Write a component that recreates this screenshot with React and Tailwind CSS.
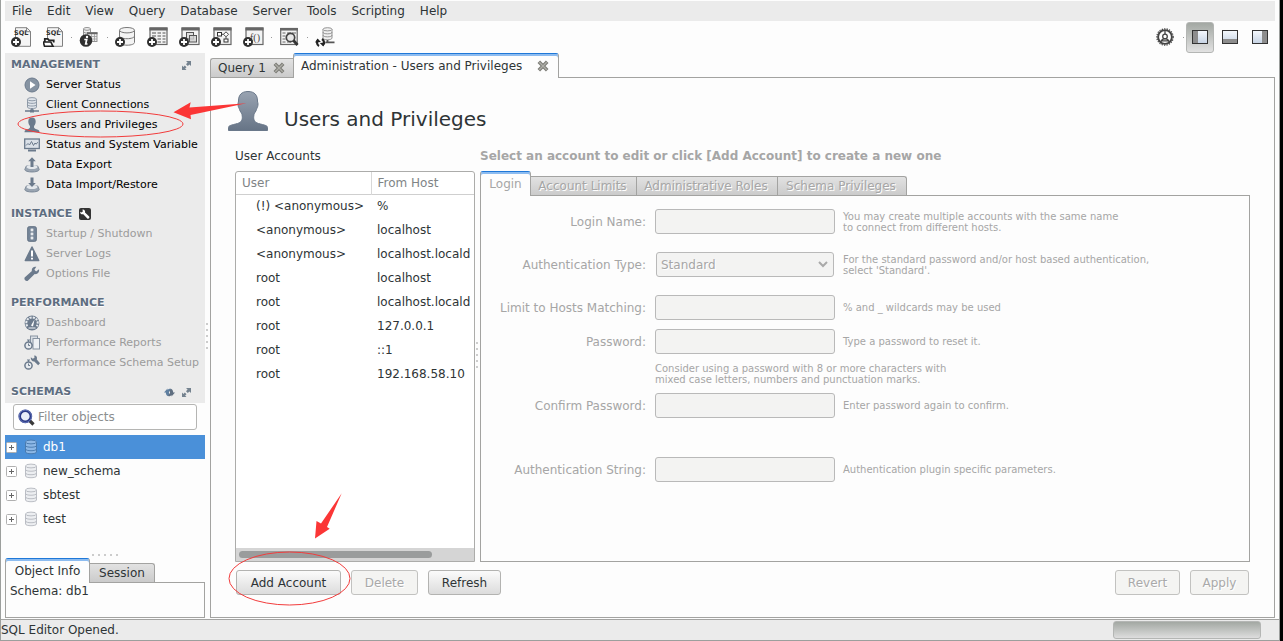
import React from "react";

/* ---------- toolbar icons ---------- */

function Badge() {
  return (
    <g>
      <circle cx="5" cy="15" r="5" fill="#2f2f2f" />
      <path d="M5 12v6M2 15h6" stroke="#fff" strokeWidth="1.8" />
    </g>
  );
}

function SqlPage() {
  return (
    <g>
      <path d="M4.500 .7h11.300l3.700 3.800v14.800h-15z" fill="#f5f5f5" stroke="#808080" />
      <path d="M15.600 .7v4h4" fill="none" stroke="#808080" />
      <text x="3" y="7.600" fontSize="6.500" fontWeight="bold" fill="#333" fontFamily="DejaVu Sans, sans-serif">
        SQL
      </text>
    </g>
  );
}

function TableFrame() {
  return (
    <g>
      <rect x="3" y="1" width="17" height="16.5" fill="#f3f3f3" stroke="#666" strokeWidth="1.2" />
      <path d="M2.500 2h18" stroke="#666" strokeWidth="3" />
    </g>
  );
}

function Cylinder() {
  return (
    <g fill="#f3f3f3" stroke="#777" strokeWidth="1">
      <path d="M4.500 3.200v12.300c0 1.500 3.400 2.700 7.600 2.700s7.400-1.200 7.400-2.700V3.200" />
      <ellipse cx="12" cy="3.200" rx="7.500" ry="2.700" />
      <path d="M4.500 9c0 1.500 3.400 2.700 7.600 2.700s7.400-1.200 7.400-2.700" fill="none" />
    </g>
  );
}

const toolIcons = {
  newSql: (
    <>
      <SqlPage />
      <Badge />
    </>
  ),
  openSql: (
    <>
      <SqlPage />
      <path d="M3.500 13h9v3h-9z" fill="#f5f5f5" />
      <path d="M1.800 18.500V11.800h3l1.300 1.500h4.600v2.200" fill="#fff" stroke="#222" strokeWidth="1.800" />
      <path d="M.3 15h7.500l2.200 4.300H1.500z" fill="#fff" stroke="#222" strokeWidth="1.600" />
    </>
  ),
  inspector: (
    <>
      <g fill="#eee" stroke="#888" strokeWidth=".9">
        <path d="M4.500 1.900v8h7v-8" />
        <ellipse cx="8" cy="1.900" rx="3.500" ry="1.400" />
        <path d="M4.500 5c1.500 1.500 5.500 1.500 7 0" fill="none" />
        <rect x="8.500" y="5.500" width="9.500" height="9" />
      </g>
      <path d="M8 6.300h10.500" stroke="#666" strokeWidth="1.800" />
      <path d="M9 9.500h9M9 12h9M12.500 7v7M15.500 7v7" stroke="#999" strokeWidth=".8" />
      <circle cx="7" cy="13.500" r="6.300" fill="#2f2f2f" />
      <circle cx="8" cy="10" r="1.200" fill="#fff" />
      <path d="M5.300 12.500h2.400l-1 4.500h1.800" fill="none" stroke="#fff" strokeWidth="1.700" />
    </>
  ),
  newSchema: (
    <>
      <Cylinder />
      <Badge />
    </>
  ),
  newTable: (
    <>
      <TableFrame />
      <path
        d="M5 6h4M10.500 6h3.500M15.500 6h3M5 9h4M10.500 9h3.500M15.500 9h3M10.500 12h3.500M15.500 12h3M10.500 15h3.500M15.500 15h3"
        stroke="#555"
        strokeWidth="1.200"
      />
      <Badge />
    </>
  ),
  newView: (
    <>
      <TableFrame />
      <rect x="7.500" y="5.500" width="7" height="6.500" fill="#e0e0e0" stroke="#555" />
      <rect x="10.500" y="8.500" width="7" height="6.500" fill="#d0d0d0" fillOpacity=".8" stroke="#555" />
      <Badge />
    </>
  ),
  newProcedure: (
    <>
      <TableFrame />
      <rect x="6.500" y="5.500" width="4" height="3.500" fill="#fff" stroke="#333" />
      <path d="M15 4.800l2.500 2.500-2.500 2.500-2.500-2.500zM10.500 7.300h2M15 9.800v2" fill="#fff" stroke="#333" strokeWidth=".9" />
      <rect x="13" y="12" width="4" height="3" fill="#fff" stroke="#333" />
      <Badge />
    </>
  ),
  newFunction: (
    <>
      <TableFrame />
      <text x="7" y="13.500" fontSize="10" fill="#444" fontFamily="Liberation Serif, serif">
        f()
      </text>
      <Badge />
    </>
  ),
  search: (
    <>
      <rect x="1.700" y="1.500" width="16.500" height="16" fill="#f3f3f3" stroke="#666" strokeWidth="1.200" />
      <path d="M1 2.300h18" stroke="#666" strokeWidth="2.500" />
      <path d="M3.500 6h3M3.500 9h3M3.500 12h3M3.500 15h3M8 6h4M13 6h4M8 15h4" stroke="#666" strokeWidth="1.200" />
      <circle cx="11.500" cy="10.500" r="4.200" fill="#e8e8e8" stroke="#444" strokeWidth="1.700" />
      <path d="M14.500 13.500l4 4.500" stroke="#333" strokeWidth="2.800" />
    </>
  ),
  reconnect: (
    <>
      <g fill="#f0f0f0" stroke="#888" strokeWidth=".9">
        <path d="M8 2.300v8.700c0 2.400 9 2.400 9 0V2.300" />
        <ellipse cx="12.500" cy="2.300" rx="4.500" ry="1.600" />
        <path d="M8 5.200c0 2.200 9 2.200 9 0M8 8.200c0 2.200 9 2.200 9 0" fill="none" />
      </g>
      <path d="M12.500 13v3M10.500 15.300h9" stroke="#555" strokeWidth="1.800" />
      <path d="M4 19C1.500 17.500 1.500 14.500 3.500 13M7 12c2.500 1.500 2.500 4.500.5 6" fill="none" stroke="#222" strokeWidth="2.200" />
      <path d="M0 15.500l2.500-4 3.500 3.500zM10.800 15.500l-2.500 4-3.500-3.500z" fill="#222" />
    </>
  ),
};

function ToolButton({ name, label }) {
  return (
    <button aria-label={label} title={label} className="flex h-8 w-8 items-center justify-center">
      <svg width="21" height="21" viewBox="0 0 21 21">
        {toolIcons[name]}
      </svg>
    </button>
  );
}

function ToolSeparator() {
  return (
    <span className="flex h-8 w-1 items-center justify-center">
      <span className="size-px bg-[#9a9a9a]" />
    </span>
  );
}

function PaneIcon({ side }) {
  return (
    <svg width="16" height="14" viewBox="0 0 16 14">
      <defs>
        <linearGradient id={"pane-" + side} x1="0" y1="0" x2="0" y2="1">
          <stop offset="0" stopColor="#f6f9fd" />
          <stop offset="1" stopColor="#c6d3e4" />
        </linearGradient>
      </defs>
      <rect x=".5" y=".5" width="15" height="13" fill={"url(#pane-" + side + ")"} stroke="#333" />
      {side === "left" && <rect x="1" y="1" width="5" height="12" fill="#8d8d8d" />}
      {side === "bottom" && <rect x="1" y="9" width="14" height="4" fill="#8d8d8d" />}
      {side === "right" && <rect x="10" y="1" width="5" height="12" fill="#8d8d8d" />}
    </svg>
  );
}

/* ---------- sidebar icons ---------- */

const SLATE = "#6b7a8c";

const navIcons = {
  play: (
    <>
      <circle cx="8" cy="8" r="7" fill="#8693a2" stroke={SLATE} />
      <path d="M6 4.300l5.500 3.700L6 11.700z" fill="#fff" />
    </>
  ),
  connections: (
    <>
      <g fill="#dfe4ea" stroke="#8793a1" strokeWidth=".9">
        <path d="M3.500 2.200v8c0 1.800 9 1.800 9 0v-8" />
        <ellipse cx="8" cy="2.200" rx="4.500" ry="1.600" />
        <path d="M3.500 5c0 1.800 9 1.800 9 0M3.500 7.700c0 1.800 9 1.800 9 0" fill="none" />
      </g>
      <path d="M1 14h14M8 11.500V14" stroke={SLATE} strokeWidth="1.600" />
      <rect x="6" y="12.500" width="4" height="3" fill={SLATE} />
    </>
  ),
  user: (
    <path
      d="M4.300 4.500C4.300 1.800 5.600.5 8 .5s3.700 1.300 3.700 4c0 2-.6 3.200-1.600 4.500-.5 1.800.4 2.600 2.400 3.200 2 .5 3 .9 3 3.100H.5c0-2.200 1-2.600 3-3.100 2-.6 2.900-1.400 2.400-3.200C4.900 7.700 4.300 6.500 4.300 4.500z"
      fill={SLATE}
    />
  ),
  monitor: (
    <>
      <rect x=".7" y="2" width="14.600" height="9.500" fill="#dbe1e8" stroke={SLATE} strokeWidth="1.300" />
      <path d="M2 8.500l2-2L5.500 8l2-3.500 2 4L11 6l1.200 1.200 1.500-2" fill="none" stroke={SLATE} />
      <path d="M4 12.500h8v2H4z" fill={SLATE} />
    </>
  ),
  export: (
    <>
      <path d="M2.300 9h11.400l1.500 3.500c0 3.300-14.400 3.300-14.400 0z" fill="#9aa5b2" stroke="#7d8a99" />
      <ellipse cx="8" cy="10" rx="5.500" ry="2" fill="#e4e8ec" />
      <path d="M8 .3l3.800 4H9.500V10h-3V4.300H4.200z" fill={SLATE} />
    </>
  ),
  import: (
    <>
      <path d="M2.300 9h11.400l1.500 3.500c0 3.300-14.400 3.300-14.400 0z" fill="#9aa5b2" stroke="#7d8a99" />
      <ellipse cx="8" cy="10" rx="5.500" ry="2" fill="#e4e8ec" />
      <path d="M8 10L4.200 6h2.300V.5h3V6h2.300z" fill={SLATE} />
    </>
  ),
  traffic: (
    <>
      <rect x="3.700" y=".7" width="8.600" height="14.600" rx="1.500" fill="#77879a" stroke="#5f6e80" />
      <g fill="#e9ecef" stroke="#5f6e80" strokeWidth=".5">
        <circle cx="8" cy="4" r="1.900" />
        <circle cx="8" cy="8" r="1.900" />
        <circle cx="8" cy="12" r="1.900" />
      </g>
    </>
  ),
  warning: (
    <>
      <path d="M8 1l6.700 13.500H1.300z" fill={SLATE} stroke={SLATE} strokeLinejoin="round" strokeWidth="1.500" />
      <path d="M8 4.500v6M8 11.800v1.800" stroke="#fff" strokeWidth="2" />
    </>
  ),
  wrench: (
    <path
      d="M15 3.300l-2.900 2.100-1.700-1.700L12.300.8C9.700 0 7.200 2.200 7.900 5L.9 11.200c-1.700 1.900 1.300 5 3.200 3.200L10.700 8c2.700.8 5-1.900 4.300-4.700z"
      fill={SLATE}
    />
  ),
  gauge: (
    <>
      <circle cx="8" cy="8" r="7.400" fill={SLATE} />
      <path d="M3.300 11.300A5.700 5.700 0 1 1 12.700 11.300" fill="none" stroke="#e6eaee" strokeWidth="2" strokeDasharray="2.200 1" />
      <path d="M7 10.500L10.500 4.500 9 11.500z" fill="#fff" />
      <path d="M4.500 13h7" stroke="#c4ccd4" strokeWidth="1.500" />
    </>
  ),
  reports: (
    <>
      <rect x="6.500" y="1" width="7" height="9" fill="#d9dee4" stroke="#8793a1" />
      <rect x="9" y="3.500" width="6.500" height="10.500" fill="#eef1f4" stroke="#8793a1" />
      <circle cx="4.500" cy="10.500" r="3.600" fill="#e6eaee" stroke={SLATE} strokeWidth="1.500" />
      <path d="M4.500 5v2M3 5h3M4.500 8.500v2h1.500" stroke={SLATE} fill="none" />
    </>
  ),
  setup: (
    <>
      <circle cx="4.500" cy="10.500" r="3.600" fill="#e6eaee" stroke={SLATE} strokeWidth="1.500" />
      <path d="M4.500 5v2M3 5h3M4.500 8.500v2h1.500" stroke={SLATE} fill="none" />
      <path
        d="M6.800 2.200l2 1.600 1.700-1L10.200.6C12.500.5 13.600 2.700 12.800 4.500l3.200 3.800-1.800 2-3.900-3.900C8.300 6.700 6.500 4.800 6.800 2.200z"
        fill={SLATE}
      />
    </>
  ),
};

function NavItem({ icon, children, disabled }) {
  return (
    <li>
      <button
        disabled={disabled}
        className="flex h-5 w-full items-center gap-[6px] overflow-hidden pl-[19px] text-left text-[11px] whitespace-nowrap text-black disabled:text-[#9b9b9b]"
      >
        <svg width="16" height="16" viewBox="0 0 16 16" className="shrink-0">
          {navIcons[icon]}
        </svg>
        {children}
      </button>
    </li>
  );
}

function ExpandIcon() {
  return (
    <svg width="9" height="9" viewBox="0 0 9 9">
      <path d="M4 0h5v5L7.400 3.400 5.800 5 4 3.200 5.600 1.600z" fill="#74828f" />
      <path d="M0 4.500l1.400 1.400L2.800 4.500l1.700 1.700-1.400 1.400L4.500 9H0z" fill="#74828f" />
    </svg>
  );
}

function SectionHeader({ title, children }) {
  return (
    <div className="flex h-5 items-center gap-[7px] pr-[14px] pl-[6px]">
      <h2 className="text-[11px] font-bold text-[#5d6d80] [text-shadow:0_1px_0_#fff]">{title}</h2>
      {children}
    </div>
  );
}

function SchemaRow({ name, selected }) {
  return (
    <li className={selected ? "flex h-6 items-center bg-[#4a90d9] pl-px text-white" : "flex h-6 items-center pl-px"}>
      <button aria-label={"Expand " + name} className="size-[11px]">
        <svg width="11" height="11" viewBox="0 0 11 11">
          <rect x=".5" y=".5" width="10" height="10" rx="1" fill="#fff" stroke="#b0b0b0" />
          <path d="M3 5.500h5M5.500 3v5" stroke="#666" />
        </svg>
      </button>
      <svg width="14" height="16" viewBox="0 0 14 16" className="ml-[7px]">
        <g fill={selected ? "#8db8e6" : "#eceef1"} stroke={selected ? "#4677ab" : "#b4b8be"} strokeWidth=".9">
          <path d="M1.500 3v10c0 2.300 11 2.300 11 0V3" />
          <ellipse cx="7" cy="3" rx="5.500" ry="1.900" />
          <path d="M1.500 6.500c0 2.300 11 2.300 11 0M1.500 10c0 2.300 11 2.300 11 0" fill="none" />
        </g>
      </svg>
      <span className="ml-[5px]">{name}</span>
    </li>
  );
}

function Dots({ vertical }) {
  return (
    <div className={vertical ? "flex flex-col gap-[4px]" : "flex gap-[4px]"}>
      {[0, 1, 2, 3, 4].map((i) => (
        <span key={i} className="size-[2px] bg-[#cccccc]" />
      ))}
    </div>
  );
}

function CloseIcon() {
  return (
    <svg width="12" height="12" viewBox="0 0 12 12">
      <path d="M1.800 1.800l8.400 8.400M10.200 1.800L1.800 10.200" stroke="#7d7d77" strokeWidth="3.600" />
      <path d="M2.300 2.300l7.400 7.400M9.700 2.300L2.300 9.700" stroke="#aeaea8" strokeWidth="1.300" />
    </svg>
  );
}

/* ---------- right side ---------- */

const accounts = [
  ["(!) <anonymous>", "%"],
  ["<anonymous>", "localhost"],
  ["<anonymous>", "localhost.locald"],
  ["root", "localhost"],
  ["root", "localhost.locald"],
  ["root", "127.0.0.1"],
  ["root", "::1"],
  ["root", "192.168.58.10"],
];

function Field({ id, label, note, type = "text", className = "", children }) {
  return (
    <div className={"grid grid-cols-[165px_180px_1fr] items-center " + className}>
      <label htmlFor={id} className="text-right">
        {label}
      </label>
      <div className="ml-[9px] w-[180px]">
        {children || (
          <input id={id} type={type} disabled className="block h-[25px] w-full rounded-[3px] border border-[#b9b9b9] bg-[#f3f3f2] px-1" />
        )}
      </div>
      <p className="ml-[17px] text-[10px] leading-[11px]">{note}</p>
    </div>
  );
}

function Button({ children, disabled, className }) {
  return (
    <button
      disabled={disabled}
      className={
        "h-[25px] rounded-[3px] border border-[#b3b3b1] bg-linear-to-b from-[#fbfbfb] to-[#dcdcdc] disabled:border-[#c2c2c0] disabled:bg-none disabled:bg-[#f4f4f2] disabled:text-[#a9a9a9] disabled:[text-shadow:1px_1px_0_#fff] " +
        className
      }
    >
      {children}
    </button>
  );
}

const idleTab = "border border-b-0 border-l-0 border-[#a3a3a1] bg-linear-to-b from-[#e2e2e2] to-[#cbcbcb]";
const activeTab =
  "relative -mb-px border border-t-[#1f78d8] border-b-0 border-[#a3a3a1] bg-[#fdfdfd] shadow-[inset_0_2px_0_#8dbcf0] rounded-t-[3px]";

export default function App() {
  return (
    <div className="relative flex min-h-screen bg-black pr-[3px] font-['DejaVu_Sans',sans-serif] text-[12px] leading-[16px] text-[#2e3436]">
      <div className="flex min-w-0 flex-1 flex-col border-x border-b border-[#9c9f9d] bg-[#fdfdfd] pt-px">
        <nav className="mx-1 flex h-5 items-center gap-[15px] bg-[#ebebeb] pl-[7px]">
          {["File", "Edit", "View", "Query", "Database", "Server", "Tools", "Scripting", "Help"].map((m) => (
            <button key={m}>{m}</button>
          ))}
        </nav>

        <div className="mx-1 flex h-8 items-center pr-px">
          <ToolButton name="newSql" label="New SQL tab" />
          <ToolButton name="openSql" label="Open SQL script" />
          <ToolSeparator />
          <ToolButton name="inspector" label="Schema inspector" />
          <ToolSeparator />
          <ToolButton name="newSchema" label="New schema" />
          <ToolButton name="newTable" label="New table" />
          <ToolButton name="newView" label="New view" />
          <ToolButton name="newProcedure" label="New procedure" />
          <ToolButton name="newFunction" label="New function" />
          <ToolSeparator />
          <ToolButton name="search" label="Search table data" />
          <ToolSeparator />
          <ToolButton name="reconnect" label="Reconnect" />
          <div className="flex-1" />
          <button aria-label="Preferences" className="flex size-8 items-center justify-center">
            <svg width="18" height="18" viewBox="0 0 18 18" fill="none" stroke="#444">
              <circle cx="9" cy="9" r="8.200" strokeWidth="1.200" strokeDasharray="1.300 1.200" />
              <circle cx="9" cy="9" r="6.900" strokeWidth="1.900" />
              <path d="M9 2.500v4M4.500 14l2-2.500M13.500 14l-2-2.500" strokeWidth="1.300" />
              <circle cx="9" cy="8.500" r="2.300" strokeWidth="1.300" />
              <path d="M6 12.800c.5-3 5.500-3 6 0z" strokeWidth="1.200" />
            </svg>
          </button>
          <ToolSeparator />
          <div className="ml-px flex gap-[2px]">
            <button
              aria-label="Toggle sidebar"
              className="flex h-[31px] w-7 items-center justify-center rounded-[3px] border border-[#b4b6b4] bg-linear-to-b from-[#a3a8a3] to-[#e2e2e2]"
            >
              <PaneIcon side="left" />
            </button>
            <button aria-label="Toggle output area" className="flex h-[31px] w-7 items-center justify-center">
              <PaneIcon side="bottom" />
            </button>
            <button aria-label="Toggle secondary sidebar" className="flex h-[31px] w-7 items-center justify-center">
              <PaneIcon side="right" />
            </button>
          </div>
        </div>

        <div className="mx-1 mb-px flex flex-1">
          <aside className="flex w-[200px] shrink-0 flex-col">
            <div className="flex flex-col gap-[9px] bg-[#ebebeb] pt-[2px] pb-px">
              <section>
                <SectionHeader title="MANAGEMENT">
                  <button aria-label="Expand management" className="ml-auto">
                    <ExpandIcon />
                  </button>
                </SectionHeader>
                <ul>
                  <NavItem icon="play">Server Status</NavItem>
                  <NavItem icon="connections">Client Connections</NavItem>
                  <NavItem icon="user">Users and Privileges</NavItem>
                  <NavItem icon="monitor">Status and System Variable</NavItem>
                  <NavItem icon="export">Data Export</NavItem>
                  <NavItem icon="import">Data Import/Restore</NavItem>
                </ul>
              </section>
              <section>
                <SectionHeader title="INSTANCE">
                  <svg width="12" height="12" viewBox="0 0 12 12">
                    <rect width="12" height="12" rx="2" fill="#333" />
                    <path
                      d="M3.500 1.500l.3 2L2.500 4.600 1.200 3.700C1 5.500 2.500 6.700 4.300 6.200l4 4.300c1.200.8 2.700-.7 1.900-1.900L6 4.500C6.500 2.700 5.300 1.200 3.500 1.500z"
                      fill="#fff"
                    />
                  </svg>
                </SectionHeader>
                <ul>
                  <NavItem icon="traffic" disabled>Startup / Shutdown</NavItem>
                  <NavItem icon="warning" disabled>Server Logs</NavItem>
                  <NavItem icon="wrench" disabled>Options File</NavItem>
                </ul>
              </section>
              <section>
                <SectionHeader title="PERFORMANCE" />
                <ul>
                  <NavItem icon="gauge" disabled>Dashboard</NavItem>
                  <NavItem icon="reports" disabled>Performance Reports</NavItem>
                  <NavItem icon="setup" disabled>Performance Schema Setup</NavItem>
                </ul>
              </section>
              <SectionHeader title="SCHEMAS">
                <button aria-label="Refresh schemas" className="ml-auto">
                  <svg width="11" height="9" viewBox="0 0 11 9">
                    <path d="M0 4.500L3.500.5v1.600C4.500.9 6 .6 7.200 1L5.800 3C4.800 3.300 4.600 5.200 5.500 6L4.200 8.300C2.800 7.800 1.800 6.500 1.800 4.500z" fill="#5f7fa0" />
                    <path d="M11 4.500L7.500 8.500V6.900C6.500 8.100 5 8.400 3.800 8L5.200 6C6.200 5.700 6.400 3.800 5.500 3L6.800.7C8.200 1.200 9.200 2.500 9.200 4.500z" fill="#5f6e80" />
                  </svg>
                </button>
                <button aria-label="Expand schemas">
                  <ExpandIcon />
                </button>
              </SectionHeader>
            </div>

            <div className="mx-2 mt-px flex h-[26px] items-center gap-[3px] rounded-[3px] border border-[#b5b5b3] bg-white pl-1">
              <svg width="17" height="17" viewBox="0 0 17 17" className="shrink-0">
                <path d="M11 11l4.500 4.500" stroke="#3a3a3a" strokeWidth="3.200" />
                <circle cx="7.300" cy="7.300" r="5.600" fill="#e9eef8" stroke="#2b3a86" strokeWidth="2.600" />
                <circle cx="7.300" cy="7.300" r="6.200" fill="none" stroke="#7f90cf" strokeWidth=".7" />
              </svg>
              <input
                aria-label="Filter objects"
                placeholder="Filter objects"
                className="w-full min-w-0 bg-transparent outline-none placeholder:text-[#8b8e8f]"
              />
            </div>

            <ul className="mt-[5px] flex-1">
              <SchemaRow name="db1" selected />
              <SchemaRow name="new_schema" />
              <SchemaRow name="sbtest" />
              <SchemaRow name="test" />
            </ul>

            <div className="flex justify-center pb-[2px]">
              <Dots />
            </div>
            <div role="tablist" className="flex items-end">
              <button role="tab" aria-selected="true" className={activeTab + " h-[25px] w-[85px]"}>
                Object Info
              </button>
              <button role="tab" aria-selected="false" className={idleTab + " h-[19px] w-[65px] rounded-tr-[3px]"}>
                Session
              </button>
            </div>
            <div className="h-9 border border-[#a3a3a1] px-1">Schema: db1</div>
          </aside>

          <div className="flex w-[5px] shrink-0 items-center pl-px">
            <Dots vertical />
          </div>

          <main className="flex min-w-0 flex-1 flex-col">
            <div role="tablist" className="flex items-end">
              <button
                role="tab"
                aria-selected="false"
                className="flex h-[19px] w-[83px] items-center gap-[7px] rounded-tl-[3px] border border-r-0 border-b-0 border-[#a3a3a1] bg-linear-to-b from-[#e2e2e2] to-[#cbcbcb] pl-[7px]"
              >
                Query 1
                <CloseIcon />
              </button>
              <button
                role="tab"
                aria-selected="true"
                className={activeTab + " flex h-[25px] w-[266px] items-center justify-between pr-[9px] pl-[7px]"}
              >
                Administration - Users and Privileges
                <CloseIcon />
              </button>
            </div>

            <div className="flex flex-1 flex-col border border-[#a3a3a1] pr-6 pb-[22px] pl-[17px]">
              <header className="flex h-[53px] items-end gap-4">
                <svg width="40" height="40" viewBox="0 0 40 40">
                  <defs>
                    <linearGradient id="bust" x1="0" y1="0" x2="0" y2="1">
                      <stop offset="0" stopColor="#99a3b1" />
                      <stop offset="1" stopColor="#667486" />
                    </linearGradient>
                  </defs>
                  <path
                    d="M20 .5c6.500 0 9.500 3.500 9.500 9.500 0 1.500.8 2 .4 4.500-.3 2-1 2.500-1.400 4-.6 2.200-2 3-2.500 5-.8 4.500-.4 7.500 4.500 9 6 1.600 9 2 9 4v3h-39v-3c0-2 3-2.400 9-4 4.900-1.500 5.300-4.500 4.500-9-.5-2-1.900-2.800-2.500-5-.4-1.500-1.100-2-1.400-4-.4-2.500.4-3 .4-4.500 0-6 3-9.500 9.500-9.500z"
                    fill="url(#bust)"
                    stroke="#6a788a"
                  />
                </svg>
                <h1 className="text-[20px] leading-6">Users and Privileges</h1>
              </header>

              <div className="ml-[7px] flex flex-1 pt-[17px]">
                <section className="flex w-[240px] shrink-0 flex-col">
                  <h2 className="pb-[7px]">User Accounts</h2>
                  <div className="flex flex-1 flex-col overflow-hidden rounded-t-[3px] border border-[#acacaa] bg-white">
                    <table className="w-full table-fixed border-collapse text-left whitespace-nowrap">
                      <thead>
                        <tr className="h-[22px] border-b border-[#cfcfcf] text-[#808486]">
                          <th className="w-[135px] border-r border-[#d8d8d8] p-0 pl-[6px] font-normal">User</th>
                          <th className="p-0 pl-[6px] font-normal">From Host</th>
                        </tr>
                      </thead>
                      <tbody>
                        {accounts.map(([user, host], i) => (
                          <tr key={i} className="h-6">
                            <td className="p-0 pl-5">{user}</td>
                            <td className="overflow-hidden p-0 pl-[6px]">{host}</td>
                          </tr>
                        ))}
                      </tbody>
                    </table>
                    <div className="mt-auto h-[13px] bg-[#d5d5d5] px-[3px] pt-[3px]">
                      <div className="h-[7px] w-5/6 rounded-full bg-[#9a9c9c]" />
                    </div>
                  </div>
                </section>

                <div className="flex w-[5px] shrink-0 items-center pl-px">
                  <Dots vertical />
                </div>

                <section className="flex min-w-0 flex-1 flex-col text-[#a6a6a6]">
                  <h2 className="pb-[7px] font-bold">Select an account to edit or click [Add Account] to create a new one</h2>
                  <div role="tablist" className="flex items-end">
                    <button role="tab" aria-selected="true" className={activeTab + " h-[25px] w-[51px]"}>
                      Login
                    </button>
                    {[
                      ["Account Limits", "w-[106px]"],
                      ["Administrative Roles", "w-[141px]"],
                      ["Schema Privileges", "w-[129px] rounded-tr-[3px]"],
                    ].map(([t, w]) => (
                      <button
                        key={t}
                        role="tab"
                        aria-selected="false"
                        disabled
                        className={idleTab + " h-[19px] pr-[2px] pb-px [text-shadow:1px_1px_0_#fff] " + w}
                      >
                        {t}
                      </button>
                    ))}
                  </div>
                  <form className="flex-1 border border-[#a3a3a1] pt-[13px]">
                    <Field
                      id="login"
                      label="Login Name:"
                      note={<>You may create multiple accounts with the same name<br />to connect from different hosts.</>}
                    />
                    <Field
                      id="auth-type"
                      label="Authentication Type:"
                      className="mt-[18px]"
                      note={<>For the standard password and/or host based authentication,<br />select 'Standard'.</>}
                    >
                      <div className="relative px-px">
                        <select
                          id="auth-type"
                          disabled
                          className="block h-[25px] w-full appearance-none rounded-[3px] border border-[#b9b9b9] bg-[#f3f3f2] px-1 opacity-100 [text-shadow:1px_1px_0_#fff]"
                        >
                          <option>Standard</option>
                        </select>
                        <svg width="10" height="7" viewBox="0 0 10 7" className="pointer-events-none absolute top-[9px] right-[7px]">
                          <path d="M1 1l4 4 4-4" fill="none" stroke="#a9a9a9" strokeWidth="2" />
                        </svg>
                      </div>
                    </Field>
                    <Field id="hosts" label="Limit to Hosts Matching:" className="mt-[18px]" note="% and _ wildcards may be used" />
                    <Field id="password" type="password" label="Password:" className="mt-[9px]" note="Type a password to reset it." />
                    <p className="mt-[9px] ml-[174px] text-[10px] leading-[11px]">
                      Consider using a password with 8 or more characters with
                      <br />
                      mixed case letters, numbers and punctuation marks.
                    </p>
                    <Field id="confirm" type="password" label="Confirm Password:" className="mt-2" note="Enter password again to confirm." />
                    <Field id="auth-string" label="Authentication String:" className="mt-[39px]" note="Authentication plugin specific parameters." />
                  </form>
                </section>
              </div>

              <div className="mr-px ml-2 flex pt-2">
                <Button className="w-[105px]">Add Account</Button>
                <Button disabled className="ml-[10px] w-[67px]">Delete</Button>
                <Button className="ml-[10px] w-[73px]">Refresh</Button>
                <Button disabled className="ml-auto w-[65px]">Revert</Button>
                <Button disabled className="ml-[10px] w-[59px]">Apply</Button>
              </div>
            </div>
          </main>
        </div>

        <footer className="flex h-[21px] items-center justify-between border-t border-[#a3a3a1] bg-[#ebebeb] pr-[18px]">
          <span>SQL Editor Opened.</span>
          <div className="h-[18px] w-[148px] rounded-[3px] border border-[#b4b6b4] bg-linear-to-b from-[#a3a8a3] to-[#dedede]" />
        </footer>
      </div>

      <svg width="360" height="620" viewBox="0 0 360 620" className="pointer-events-none absolute top-0 left-0">
        <g fill="none" stroke="#f23c3c">
          <ellipse cx="100.500" cy="124" rx="82.500" ry="13" />
          <ellipse cx="289.500" cy="578.500" rx="60.500" ry="26.500" />
        </g>
        <g fill="#fb3636">
          <path d="M173.500 112.300L190.700 102.300 189.500 107.500 246.500 103.300 190.500 115 191 119.300z" />
          <path d="M315 538.500L316.500 521 321 523.500 341.700 493.300 327 527 329.700 528.700z" />
        </g>
      </svg>
    </div>
  );
}
